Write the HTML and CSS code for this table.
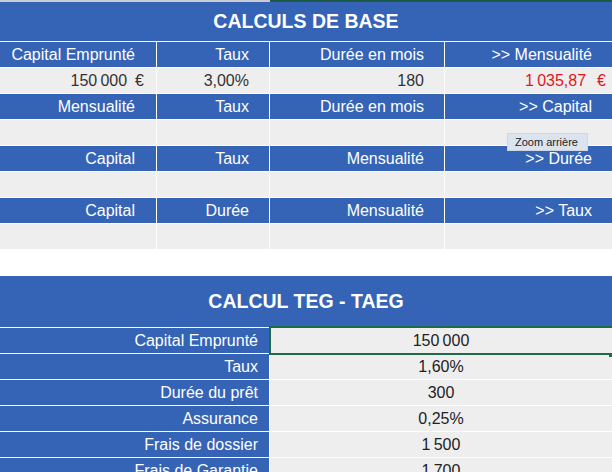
FILE: index.html
```html
<!DOCTYPE html>
<html lang="fr">
<head>
<meta charset="utf-8">
<title>Calculs de base</title>
<link rel="stylesheet" href="styles.css">
</head>
<body>
<div class="sheet">
  <div class="topline"><span class="tl-grey"></span><span class="tl-green"></span></div>

  <section class="base">
    <div class="title">CALCULS DE BASE</div>

    <div class="h">Capital Emprunté</div>
    <div class="h">Taux</div>
    <div class="h">Durée en mois</div>
    <div class="h">&gt;&gt; Mensualité</div>

    <div class="d eur1">150&#8201;000<span class="eur e1">€</span></div>
    <div class="d">3,00%</div>
    <div class="d">180</div>
    <div class="d red eur4">1&#8201;035,87<span class="eur e4">€</span></div>

    <div class="h">Mensualité</div>
    <div class="h">Taux</div>
    <div class="h">Durée en mois</div>
    <div class="h">&gt;&gt; Capital</div>

    <div class="d"></div><div class="d"></div><div class="d"></div><div class="d"></div>

    <div class="h">Capital</div>
    <div class="h">Taux</div>
    <div class="h">Mensualité</div>
    <div class="h">&gt;&gt; Durée</div>

    <div class="d"></div><div class="d"></div><div class="d"></div><div class="d"></div>

    <div class="h">Capital</div>
    <div class="h">Durée</div>
    <div class="h">Mensualité</div>
    <div class="h">&gt;&gt; Taux</div>

    <div class="d"></div><div class="d"></div><div class="d"></div><div class="d"></div>
  </section>

  <section class="teg">
    <div class="title">CALCUL TEG - TAEG</div>

    <div class="lab">Capital Emprunté</div><div class="val sel">150&#8201;000</div>
    <div class="lab">Taux</div><div class="val">1,60%</div>
    <div class="lab">Durée du prêt</div><div class="val">300</div>
    <div class="lab">Assurance</div><div class="val">0,25%</div>
    <div class="lab">Frais de dossier</div><div class="val">1&#8201;500</div>
    <div class="lab">Frais de Garantie</div><div class="val">1&#8201;700</div>
  </section>

  <div class="tooltip">Zoom arrière</div>
</div>
</body>
</html>
```

FILE: styles.css
```css
html, body {
  margin: 0;
  padding: 0;
  background: #ffffff;
}

body {
  width: 612px;
  height: 472px;
  overflow: hidden;
  font-family: "Liberation Sans", Arial, sans-serif;
}

.sheet {
  position: relative;
  width: 612px;
  height: 472px;
  overflow: hidden;
}

.topline {
  display: flex;
  height: 2px;
}

.tl-grey {
  width: 270px;
  background: #c9ccd2;
}

.tl-green {
  flex: 1;
  background: #1f5a48;
}

.base {
  display: grid;
  grid-template-columns: 156px 112px 174px 167px;
  grid-template-rows: 39px;
  grid-auto-rows: 25px;
  gap: 1px;
  background: #ffffff;
}

.title {
  grid-column: 1 / -1;
  background: #3563b6;
  color: #ffffff;
  font-weight: bold;
  font-size: 19.5px;
  display: flex;
  align-items: center;
  justify-content: center;
}

.h, .d, .lab, .val {
  display: flex;
  align-items: center;
  justify-content: flex-end;
  font-size: 16px;
  padding-right: 20px;
  white-space: nowrap;
}

.h {
  background: #3563b6;
  color: #ffffff;
}

.base .h:nth-child(4n+2) {
  padding-right: 21px;
}

.d {
  background: #eeeeee;
  color: #333333;
}

.d.eur1 {
  padding-right: 12px;
}

.d.eur4 {
  padding-right: 6px;
}

.eur.e1 {
  margin-left: 8px;
}

.eur.e4 {
  margin-left: 11px;
}

.red {
  color: #e3141c;
}

.teg {
  margin-top: 27px;
  display: grid;
  grid-template-columns: 269px 342px;
  grid-template-rows: 51px;
  grid-auto-rows: 25px;
  gap: 1px;
  background: #ffffff;
}

.lab {
  background: #3563b6;
  color: #ffffff;
  padding-right: 11px;
}

.val {
  background: #eeeeee;
  color: #222222;
  justify-content: center;
  padding-right: 0;
  padding-left: 0;
}

.val.sel {
  position: relative;
}

.val.sel::after {
  content: "";
  position: absolute;
  left: -1px;
  top: -2px;
  right: -4px;
  bottom: -2px;
  border: 2px solid #1f6b45;
}

.val.sel::before {
  content: "";
  position: absolute;
  right: -1px;
  bottom: -4px;
  width: 4px;
  height: 4px;
  background: #1f6b45;
  z-index: 1;
}

.tooltip {
  position: absolute;
  left: 507px;
  top: 133px;
  width: 81px;
  height: 18px;
  box-sizing: border-box;
  background: #dbe3ef;
  border: 1px solid #cdd6e4;
  color: #222222;
  font-size: 11px;
  padding-left: 7px;
  display: flex;
  align-items: center;
  font-family: "Liberation Sans", Arial, sans-serif;
}
```
